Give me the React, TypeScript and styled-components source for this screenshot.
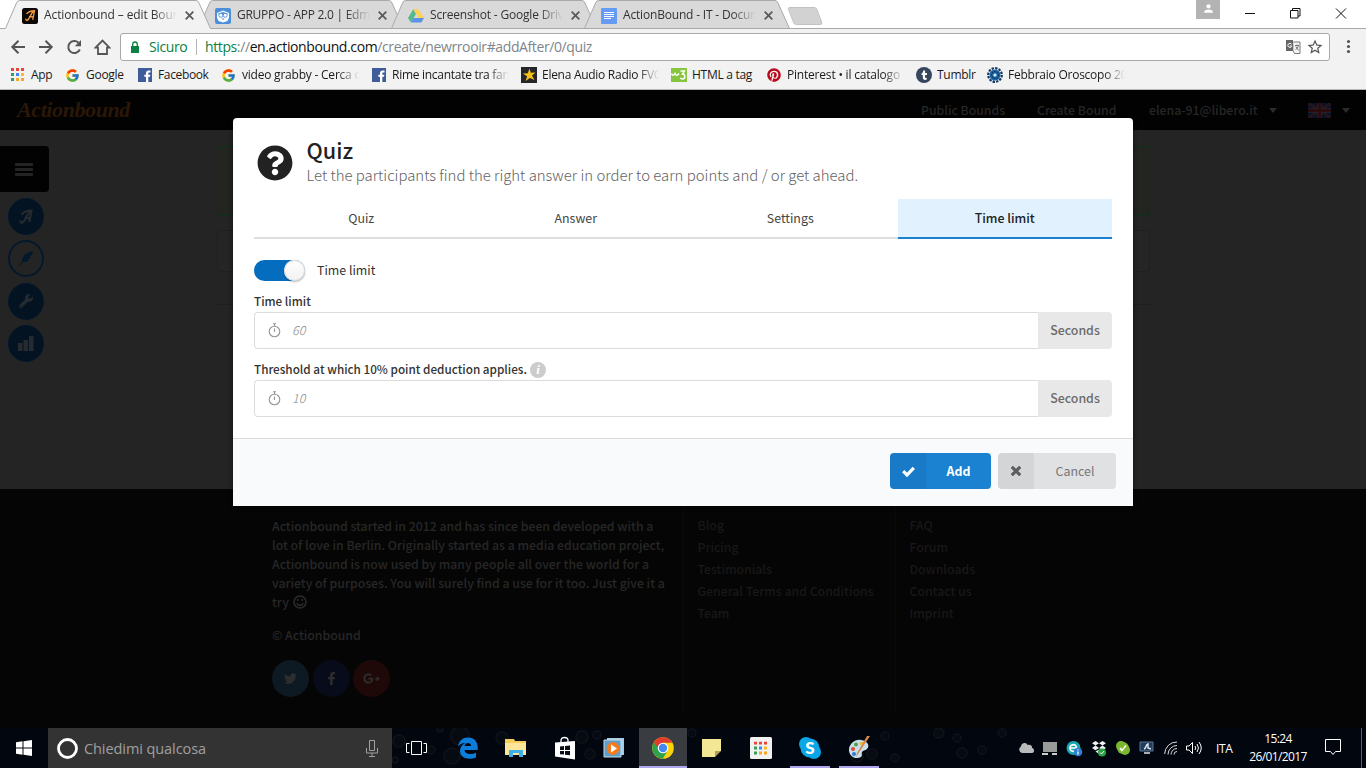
import React from "react";
import styled, { createGlobalStyle } from "styled-components";
import {
  FaTwitter,
  FaFacebookF,
  FaWrench,
  FaGooglePlusG,
  FaQuestionCircle,
  FaPinterest,
} from "react-icons/fa";
import { FcGoogle } from "react-icons/fc";
import { MdStarBorder, MdPerson } from "react-icons/md";

const uiFont = `"Open Sans", "Noto Sans", sans-serif`;
const siteFont = `"Noto Sans CJK SC", "Open Sans", sans-serif`;

const GlobalStyle = createGlobalStyle`
  * { box-sizing: border-box; }
  html, body { margin: 0; padding: 0; }
  body { width: 1366px; height: 768px; overflow: hidden; background: #fff; }
  svg { display: block; flex: none; }
`;

const Screen = styled.div`
  width: 1366px;
  height: 768px;
  display: flex;
  flex-direction: column;
  overflow: hidden;
`;

/* ---------- Browser chrome ---------- */

const TabStrip = styled.div`
  height: 29px;
  flex: none;
  display: flex;
  padding-left: 5px;
  background: linear-gradient(#fff 28px, #a9a9a9 28px);
`;

const TabBox = styled.div<{ $active?: boolean }>`
  display: grid;
  width: 206px;
  height: 29px;
  margin-right: -13px;
  position: relative;
  z-index: ${(p) => (p.$active ? 2 : 1)};
  > * { grid-area: 1 / 1; }
`;

const TabContent = styled.div`
  display: flex;
  align-items: center;
  padding: 2px 0 0 17px;
`;

const FadeText = styled.span<{ $w: number; $ls?: number; $fade?: boolean }>`
  width: ${(p) => p.$w}px;
  overflow: hidden;
  white-space: nowrap;
  letter-spacing: ${(p) => p.$ls ?? -0.28}px;
  ${(p) => p.$fade && "mask-image: linear-gradient(90deg, #000 82%, transparent);"}
`;

const TabTitle = styled(FadeText)`
  margin: 0 7.5px 1px 6px;
  font: 12px/18px ${uiFont};
  color: #333;
`;

const NewTab = styled.svg`
  margin: 7px 0 0 10px;
`;

const WindowControls = styled.div`
  margin-left: auto;
  display: flex;
  align-items: flex-start;
`;

const UserBadge = styled.div`
  width: 24px;
  height: 19px;
  margin-right: 25px;
  background: #b3b3b3;
  display: flex;
  justify-content: center;
  padding-top: 2px;
`;

const Toolbar = styled.div`
  height: 32px;
  flex: none;
  display: flex;
  align-items: center;
  background: #f2f2f2;
  padding: 4px 0 0 10px;
`;

const NavIcons = styled.div`
  width: 110px;
  display: flex;
  gap: 11px;
`;

const AddressBar = styled.div`
  width: 1210px;
  height: 28px;
  display: flex;
  align-items: center;
  padding: 0 5px 0 9px;
  background: #fff;
  border: 1px solid #a9a9a9;
  border-radius: 3px;
  font: 14px/20px ${uiFont};
  color: #80868b;
  letter-spacing: -0.39px;
`;

const Secure = styled.span`
  margin-left: 9px;
  width: 47px;
  color: #0b8043;
`;

const Url = styled.span`
  flex: 1;
  b { font-weight: 400; color: #111; }
  i { font-style: normal; color: #0b8043; }
`;

const AddressSeparator = styled.span`
  width: 1px;
  height: 16px;
  background: #b5b5b5;
  margin-right: 8px;
`;

const Bookmarks = styled.div`
  height: 29px;
  flex: none;
  display: flex;
  align-items: center;
  padding-left: 10px;
  background: #f2f2f2;
  border-bottom: 1px solid #b6b9b6;
`;

const Bookmark = styled.div<{ $w: number }>`
  width: ${(p) => p.$w}px;
  display: flex;
  align-items: center;
  gap: 5px;
  font: 12px/18px ${uiFont};
  color: #1a1a1a;
`;

/* ---------- Site behind the dialog ---------- */

const Page = styled.main`
  height: 638px;
  flex: none;
  display: flex;
  flex-direction: column;
  background: #242424;
  position: relative;
  font-family: ${siteFont};
`;

const SiteHeader = styled.header`
  height: 40px;
  flex: none;
  display: flex;
  align-items: center;
  padding: 0 16px 0 17px;
  background: #020202;
  color: #262626;
  font-size: 12.25px;
  font-weight: 500;
`;

const Logo = styled.div`
  font: italic bold 22px/30px "Liberation Serif", serif;
  letter-spacing: -0.4px;
  color: #2b1707;
  margin-right: auto;
`;

const HeaderLink = styled.span<{ $w: number }>`
  width: ${(p) => p.$w}px;
  white-space: nowrap;
`;

const Caret = styled.span`
  border: 4px solid transparent;
  border-top: 5px solid #2b2b2b;
  border-bottom: 0;
`;

const SiteBody = styled.div`
  height: 359px;
  flex: none;
  display: flex;
  padding-top: 16px;
`;

const SideBar = styled.nav`
  width: 217px;
  display: flex;
  flex-direction: column;
`;

const MenuButton = styled.div`
  width: 49px;
  height: 46px;
  margin-bottom: 6px;
  padding: 17px 0 0 15px;
  display: flex;
  flex-direction: column;
  gap: 2px;
  background: #020202;
  border-radius: 0 4px 4px 0;
`;

const MenuLine = styled.span`
  width: 18px;
  height: 3px;
  border-radius: 1px;
  background: #242424;
`;

const RoundButton = styled.div<{ $outline?: boolean }>`
  width: 36px;
  height: 37px;
  margin: 0 0 5.4px 8px;
  display: flex;
  align-items: center;
  justify-content: center;
  border-radius: 50%;
  border: ${(p) => (p.$outline ? 2 : 1)}px solid #04182b;
  background: ${(p) => (p.$outline ? "transparent" : "#031322")};
  color: ${(p) => (p.$outline ? "#04182b" : "#262b30")};
`;

const Content = styled.div`
  width: 933px;
`;

const Notice = styled.div`
  height: 70px;
  border: 1px solid #0b2f18;
  border-radius: 4px;
  background: #222520;
`;

const Panel = styled.div`
  height: 42px;
  margin: 14px 0 32px;
  border: 1px solid #202020;
  border-radius: 4px;
  background: #252525;
`;

const Rule = styled.div`
  height: 1px;
  background: #1e1e1e;
`;

const SiteFooter = styled.footer`
  flex: 1;
  display: flex;
  padding: 28px 0 14px 272px;
  background: #050505;
`;

const About = styled.div`
  width: 411px;
  font-size: 12.27px;
  font-weight: 500;
  line-height: 19.1px;
  color: #272727;
  white-space: nowrap;
`;

const Paragraph = styled.p`
  margin: 0 0 14px;
`;

const TryLine = styled.span`
  display: flex;
  align-items: center;
  gap: 4px;
`;

const Socials = styled.div`
  display: flex;
  gap: 3.5px;
`;

const Social = styled.div<{ $bg: string }>`
  width: 37px;
  height: 37px;
  border-radius: 50%;
  background: ${(p) => p.$bg};
  color: #2d2d2d;
  display: flex;
  align-items: center;
  justify-content: center;
`;

const FooterColumn = styled.ul`
  width: 212px;
  height: 225px;
  margin: -28px 0 0;
  padding: 25px 0 0 13.5px;
  list-style: none;
  border-left: 1px solid #0a0a0a;
  font-size: 12.27px;
  font-weight: 500;
  line-height: 22px;
  color: #181818;
`;

/* ---------- Dialog ---------- */

const Dialog = styled.section`
  position: absolute;
  left: 233px;
  top: 28px;
  width: 900px;
  height: 388px;
  display: flex;
  flex-direction: column;
  background: #fff;
  border-radius: 4px 4px 0 0;
  box-shadow: 0 1px 4px rgba(0, 0, 0, 0.6);
  font-size: 12.4px;
  color: #333;
`;

const DialogHeader = styled.div`
  display: flex;
  height: 81px;
  padding: 15px 0 0 24px;
  gap: 13.5px;
  svg { margin-top: 12px; }
`;

const DialogTitle = styled.h1`
  margin: 0;
  font-size: 21.6px;
  line-height: 34px;
  font-weight: 500;
  color: #222;
`;

const DialogSubtitle = styled.p`
  margin: 0;
  font-size: 14.91px;
  line-height: 16px;
  font-weight: 300;
  color: #626262;
`;

const DialogTabs = styled.div`
  display: flex;
  margin: 0 21px 21px;
`;

const DialogTab = styled.div<{ $active?: boolean }>`
  flex: 1;
  height: 40px;
  line-height: 38px;
  text-align: center;
  border-bottom: 2px solid ${(p) => (p.$active ? "#1b82d2" : "#dedede")};
  background: ${(p) => (p.$active ? "#e1f1fe" : "transparent")};
  font-weight: ${(p) => (p.$active ? 500 : 400)};
  color: ${(p) => (p.$active ? "#222" : "#444")};
`;

const SwitchRow = styled.div`
  display: flex;
  align-items: flex-start;
  gap: 12px;
  height: 21px;
  line-height: 20.5px;
  margin: 0 21px 10px;
`;

const Switch = styled.div`
  width: 51px;
  height: 21px;
  display: flex;
  justify-content: flex-end;
  border-radius: 11px;
  background: #056dbd;
`;

const Knob = styled.div`
  width: 21px;
  height: 21px;
  border-radius: 50%;
  background: linear-gradient(#fff, #f1f1f1);
  box-shadow: 0 1px 2px rgba(0, 0, 0, 0.3), inset 0 0 0 1px #dcdcdc;
`;

const Field = styled.div`
  margin: 0 21px 10px;
`;

const FieldLabel = styled.div`
  display: flex;
  gap: 3px;
  height: 21px;
  font-size: 11.72px;
  line-height: 19px;
  font-weight: 500;
  color: #333;
`;

const InfoBadge = styled.span`
  width: 16px;
  height: 16px;
  margin-top: 3px;
  border-radius: 50%;
  background: #ccc;
  color: #fff;
  font: italic bold 13px/15px "Liberation Serif", serif;
  text-align: center;
`;

const InputGroup = styled.div`
  display: flex;
  height: 37px;
`;

const Input = styled.div`
  width: 784px;
  display: flex;
  align-items: center;
  gap: 11.5px;
  padding: 0 0 2px 12.5px;
  border: 1px solid #dcdcdc;
  border-right: 0;
  border-radius: 4px 0 0 4px;
  color: #888;
  font-weight: 300;
  font-style: italic;
`;

const Addon = styled.div`
  flex: 1;
  line-height: 36px;
  text-align: center;
  background: #e8e8e8;
  border-radius: 0 4px 4px 0;
  font-weight: 500;
  color: #6c6c6c;
`;

const DialogFooter = styled.div`
  margin-top: auto;
  height: 68px;
  display: flex;
  justify-content: flex-end;
  gap: 7px;
  padding: 14px 17px 0 0;
  background: #f9fafc;
  border-top: 1px solid #d9dadb;
`;

const Button = styled.div<{ $primary?: boolean }>`
  width: ${(p) => (p.$primary ? 101 : 118)}px;
  height: 36px;
  display: flex;
  overflow: hidden;
  border-radius: 4px;
  background: ${(p) => (p.$primary ? "#1b82d2" : "#e0e1e2")};
  color: ${(p) => (p.$primary ? "#fff" : "#767778")};
  font-weight: ${(p) => (p.$primary ? 700 : 400)};
  line-height: 37px;
`;

const ButtonIcon = styled.span`
  width: 36px;
  display: flex;
  align-items: center;
  justify-content: center;
  background: rgba(0, 0, 0, 0.05);
`;

const ButtonLabel = styled.span`
  flex: 1;
  text-align: center;
`;

/* ---------- Taskbar ---------- */

const Taskbar = styled.div`
  height: 40px;
  flex: none;
  display: flex;
  align-items: center;
  background: #02060f;
  position: relative;
  color: #fff;
  font-family: ${uiFont};
`;

const Bubbles = styled.svg`
  position: absolute;
  left: 392px;
  top: 0;
`;

const StartButton = styled.div`
  width: 48px;
  display: flex;
  justify-content: center;
`;

const SearchBox = styled.div`
  width: 344px;
  height: 40px;
  display: flex;
  align-items: center;
  padding: 0 14px 0 8px;
  background: #333;
  color: #a0a0a0;
  font-size: 14.5px;
  letter-spacing: -0.08px;
  span { flex: 1; padding-left: 5px; }
`;

const AppSlot = styled.div<{ $state?: "active" | "open" }>`
  position: relative;
  width: 49px;
  height: 40px;
  display: flex;
  align-items: center;
  justify-content: center;
  background: ${(p) => (p.$state === "active" ? "#393d42" : "transparent")};
  background-clip: padding-box;
  border-right: 1px solid transparent;
  &:first-of-type { margin-right: 2px; }
  &::after {
    content: "";
    display: ${(p) => (p.$state ? "block" : "none")};
    position: absolute;
    bottom: 0;
    left: ${(p) => (p.$state === "active" ? 0 : 4)}px;
    right: ${(p) => (p.$state === "active" ? 0 : 4)}px;
    height: 2px;
    background: #aea5ee;
  }
`;

const AppRow = styled.div`
  display: flex;
`;

const Tray = styled.div`
  position: relative;
  margin-left: auto;
  display: flex;
  align-items: center;
  height: 40px;
`;

const TrayIcon = styled.div`
  width: 24.1px;
  display: flex;
  justify-content: center;
`;

const Language = styled.span`
  width: 32px;
  padding-left: 9px;
  font-size: 12px;
  letter-spacing: -0.4px;
`;

const Clock = styled.div`
  width: 78px;
  text-align: center;
  font-size: 12px;
  line-height: 18px;
  letter-spacing: -0.6px;
`;

const ShowDesktop = styled.span`
  width: 5px;
  height: 40px;
  margin-left: 16px;
  border-left: 1px solid #5b5e64;
`;

/* ---------- Drawn icons ---------- */

const Cross = ({ size = 9, color = "#5a5a5a", w = 1.8 }) => (
  <svg width={size} height={size} viewBox="0 0 9 9">
    <path d="M.7.7 8.3 8.3M8.3.7.7 8.3" stroke={color} strokeWidth={w} />
  </svg>
);

const ScriptA = ({ color = "#262b30", w = 1.8 }) => (
  <svg width="14" height="16" viewBox="0 0 14 16">
    <path d="M2.5 5.5C5 2.5 8.5 1.5 12.500 1.5L10.300 13M11.800 1.800C8 4 6.500 12 3.500 13.500 2 14 1 12.500 2.200 11.500M5.500 9h5" fill="none" stroke={color} strokeWidth={w} />
  </svg>
);

const ActionboundIcon = () => (
  <svg width="16" height="16">
    <rect width="16" height="16" rx="2.5" fill="#0a0705" />
    <g transform="translate(2.500 1.500) scale(.8)"><ScriptA color="#f0963c" w={1.7} /></g>
  </svg>
);

const Quill = () => (
  <svg width="14" height="15" viewBox="0 0 14 15" fill="currentColor">
    <path d="M13.800.3C9 .6 5 3.500 3.500 7.300c-.5 1.300-.7 2-.6 3L.3 14.500l1 .2L3.800 11c2.700.2 4.700-.5 6-2L7.500 8.800l3.300-1 1.200-2.200-2.700.2 3.500-1.600z" />
  </svg>
);

const EdmodoIcon = () => (
  <svg width="16" height="16">
    <rect width="16" height="16" rx="2" fill="#4b8fdb" />
    <path d="M2 5 8 2.500 14 5v4.500L12.500 13 8 14.500 3.500 13 2 9.500z" fill="#fff" />
    <path d="M3 5.500 8 4l5 1.500-1.500 1.800h-7z" fill="#4b8fdb" />
    <circle cx="5.800" cy="7.300" r="2" fill="#fff" stroke="#4b8fdb" strokeWidth=".9" />
    <circle cx="10.200" cy="7.300" r="2" fill="#fff" stroke="#4b8fdb" strokeWidth=".9" />
    <path d="M6.500 10.500h3L8 12z" fill="#4b8fdb" />
  </svg>
);

const DriveIcon = () => (
  <svg width="16" height="16">
    <path d="M5.300 1.300 8 6 2.900 14.600 0 10z" fill="#55b98b" />
    <path d="M5.300 1.300h5.200L16 10h-5.500z" fill="#fbd157" />
    <path d="M5.500 10H16l-2.700 4.600H2.900z" fill="#5b92ec" />
  </svg>
);

const DocsIcon = () => (
  <svg width="16" height="16">
    <rect width="16" height="16" rx="1" fill="#659bf4" />
    <path d="M3 4.500h10M3 6.500h10M3 8.500h10M3 10.500h7" stroke="#fff" />
  </svg>
);

const AppsIcon = () => {
  const colors = ["#eb4335", "#eb4335", "#eb4335", "#34a056", "#4285f4", "#fbb928", "#34a056", "#f6a623", "#f6a623"];
  return (
    <svg width="16" height="14" viewBox="0 0 16 14">
      {colors.map((c, i) => (
        <rect key={i} x={1 + (i % 3) * 5} y={Math.floor(i / 3) * 5} width="3" height="3" fill={c} />
      ))}
    </svg>
  );
};

const FacebookIcon = () => (
  <svg width="16" height="16">
    <rect x="1" y="1" width="14" height="14" fill="#3f5c9a" />
    <path d="M11.300 15V9.800H13l.3-2.100h-2V6.400c0-.7.300-1 1-1h1.200V3.500h-1.700c-1.800 0-2.800 1-2.800 2.700v1.500H7.300v2.100H9V15z" fill="#fff" />
  </svg>
);

const StarIcon = () => (
  <svg width="16" height="16">
    <rect width="16" height="16" fill="#26262a" />
    <path d="m8.500 1.500 1.300 4.300 4.700-.3-3.500 3.100 2.500 4.400-4.600-2-4.300 3 1.500-4.800-4.300-2.600 5-.4z" fill="#f5c119" />
  </svg>
);

const W3Icon = () => (
  <svg width="16" height="14">
    <rect width="16" height="14" fill="#87c540" />
    <path d="M.5 5.500Q2 9 4 5.500 5.500 9 8 5.500M9.500 3h4l-2 3c3 0 3 5 0 5-1.200 0-2-.5-2.200-1.200" fill="none" stroke="#fff" strokeWidth="1.500" />
  </svg>
);

const TumblrIcon = () => (
  <svg width="16" height="16">
    <circle cx="8" cy="8" r="8" fill="#36465d" />
    <path d="M7.200 3.500h1.900v2.600H11v1.800H9.100v2.400c0 .9.900 1 1.700.5v1.800c-2.300.9-4 0-4-2V7.900H5.500V6.500c1-.3 1.600-1.200 1.700-3z" fill="#fff" />
  </svg>
);

const HoroscopeIcon = () => (
  <svg width="16" height="16">
    <circle cx="8" cy="8" r="6.800" fill="none" stroke="#14365f" strokeWidth="2.200" strokeDasharray="2.400 1.150" />
    <circle cx="8" cy="8" r="5.500" fill="#1b68a6" />
    <circle cx="8" cy="8" r="3.500" fill="none" stroke="#0f3765" strokeWidth="1.300" strokeDasharray="1.500 1" />
    <circle cx="8" cy="8" r="1.600" fill="#d5edf8" />
  </svg>
);

const Stopwatch = () => (
  <svg width="13" height="16" fill="none" stroke="#969696" strokeWidth="1.100">
    <circle cx="6.500" cy="9.500" r="5.300" />
    <path d="M6.500 6.500v3.500M6.500 2v2M5 1.800h3" />
  </svg>
);

const Flag = () => (
  <svg width="23" height="15">
    <rect width="23" height="15" fill="#0b1024" />
    <path d="m0 0 23 15M23 0 0 15" stroke="#26262a" strokeWidth="2.500" />
    <path d="m0 0 23 15M23 0 0 15" stroke="#2b0b10" strokeWidth="1.200" />
    <path d="M11.500 0v15M0 7.500h23" stroke="#26262a" strokeWidth="4.500" />
    <path d="M11.500 0v15M0 7.500h23" stroke="#2b0b10" strokeWidth="3" />
  </svg>
);

const ChromeIcon = () => (
  <svg width="22" height="22" viewBox="0 0 22 22">
    <circle cx="11" cy="11" r="10.800" fill="#fcd20b" />
    <path d="M1.650 5.600A10.800 10.800 0 0 1 20.400 5.700H11L6.300 13.700z" fill="#e33b2e" />
    <path d="M1.650 5.600A10.800 10.800 0 0 0 10.800 21.800l4.800-8.100L11 16z L6.300 13.700z" fill="#2fa24d" />
    <circle cx="11" cy="11" r="5.300" fill="#fff" />
    <circle cx="11" cy="11" r="4.200" fill="#4587f3" />
  </svg>
);

const bubbles = [[7, 13, 6], [68, 8, 9], [60, 28, 8], [110, 10, 6], [3, 32, 3], [39, 22, 4], [48, 1, 3], [190, 9, 6], [198, 26, 5], [205, 7, 4], [300, 5, 4], [465, 28, 6], [480, 26, 5], [503, 30, 4], [493, 8, 4], [547, 5, 5], [570, 25, 5], [565, 10, 4], [610, 5, 4], [590, 22, 4]];

const tabs = [
  { title: "Actionbound – edit Boun", icon: <ActionboundIcon />, active: true, ls: -0.1 },
  { title: "GRUPPO - APP 2.0 | Edmodo", icon: <EdmodoIcon />, ls: -0.26 },
  { title: "Screenshot - Google Drive", icon: <DriveIcon />, ls: -0.18 },
  { title: "ActionBound - IT - Documenti", icon: <DocsIcon />, ls: -0.18 },
];

const bookmarks = [
  { w: 55, t: "App", icon: <AppsIcon /> },
  { w: 72, t: "Google", icon: <FcGoogle size={15} style={{ marginRight: 1 }} /> },
  { w: 84, t: "Facebook", ls: -0.36, icon: <FacebookIcon /> },
  { w: 150, t: "video grabby - Cerca con", fade: true, ls: -0.22, icon: <FcGoogle size={15} style={{ marginRight: 1 }} /> },
  { w: 150, t: "Rime incantate tra fanta", fade: true, icon: <FacebookIcon /> },
  { w: 150, t: "Elena Audio Radio FVG", fade: true, icon: <StarIcon /> },
  { w: 95, t: "HTML a tag", icon: <W3Icon /> },
  { w: 150, t: "Pinterest • il catalogo", fade: true, ls: -0.2, icon: <FaPinterest size={14} color="#bd081c" style={{ margin: "0 1px" }} /> },
  { w: 71, t: "Tumblr", icon: <TumblrIcon /> },
  { w: 150, t: "Febbraio Oroscopo 2017", fade: true, ls: -0.24, icon: <HoroscopeIcon /> },
];

export default function App() {
  return (
    <Screen>
      <GlobalStyle />
      <TabStrip>
        {tabs.map((t) => (
          <TabBox key={t.title} $active={t.active}>
            <svg width="206" height="29">
              <path d="M0 29 .5 28 11.500 3Q12.500.5 14.500.5H191Q193 .5 194 3L205.500 28.500V29z" fill={t.active ? "#f2f2f2" : "#d9d9d9"} />
              <path d="M.5 28.500 11.500 3Q12.500.5 14.500.5H191Q193 .5 194 3L205.500 28.500" fill="none" stroke="#a9a9a9" />
              {!t.active && <path d="M0 28.500h206" stroke="#a9a9a9" />}
            </svg>
            <TabContent>
              {t.icon}
              <TabTitle $w={133} $ls={t.ls} $fade>{t.title}</TabTitle>
              <Cross />
            </TabContent>
          </TabBox>
        ))}
        <NewTab width="36" height="19">
          <path d="M3 .5h24q2 0 2.700 1.500l5 13q.8 2.500-1.700 2.500H9.500q-2 0-2.700-1.500L1.500 2.500Q.8.500 3 .5z" fill="#d2d2d2" stroke="#c2c2c2" />
        </NewTab>
        <WindowControls>
          <UserBadge><MdPerson size={13} color="#fff" /></UserBadge>
          <svg width="121" height="28" fill="none" stroke="#111">
            <path d="M0 13.500h10M45.500 10.500h7.500v7.500h-7.500zM47.500 10V8.500h7.500V16H53M91 8.500l10 10M101 8.500l-10 10" />
          </svg>
        </WindowControls>
      </TabStrip>

      <Toolbar>
        <NavIcons>
          <svg width="17" height="16" fill="none" stroke="#555" strokeWidth="2"><path d="M15 8H2.500M8.500 1.800 2.300 8 8.500 14.200" /></svg>
          <svg width="17" height="16" fill="none" stroke="#555" strokeWidth="2"><path d="M1 8h12.500M7.500 1.800 13.700 8 7.500 14.200" /></svg>
          <svg width="17" height="16" fill="none" stroke="#555" strokeWidth="2"><path d="M13.800 10.500A6 6 0 1 1 12.500 3.800" /><path d="M15 1v6.200H8.800z" fill="#555" stroke="none" /></svg>
          <svg width="17" height="16" fill="none" stroke="#555" strokeWidth="1.800"><path d="M1.500 8.700 8.500 1.500l7 7.200H13V15H4V8.700z" /></svg>
        </NavIcons>
        <AddressBar>
          <svg width="10" height="13"><path d="M1 5h8v7H1z" fill="#0b8043" /><path d="M2.700 6V3.300a2.300 2.300 0 0 1 4.600 0V6" fill="none" stroke="#0b8043" strokeWidth="1.300" /></svg>
          <Secure>Sicuro</Secure>
          <AddressSeparator />
          <Url><i>https</i>://<b>en.actionbound.com</b>/create/newrrooir#addAfter/0/quiz</Url>
          <svg width="15" height="15">
            <path d="M0 0h7l1.500 11H0z" fill="#666" /><path d="M7.500 2H14v11.500H8.500L7.300 11" fill="#f4f4f4" stroke="#777" />
            <path d="M5.500 4.200A2 2 0 1 0 5.800 6H4" fill="none" stroke="#fff" /><path d="M9 5.500h4M11 4.500v1M12.500 5.500c-.5 2-1.500 3.500-3 4M9.800 6.500l2.700 4" stroke="#777" fill="none" />
          </svg>
          <MdStarBorder size={18} color="#555" style={{ marginLeft: 5 }} />
        </AddressBar>
        <svg width="36" height="16" fill="#555"><circle cx="18.500" cy="2.500" r="1.600" /><circle cx="18.500" cy="7.500" r="1.600" /><circle cx="18.500" cy="12.500" r="1.600" /></svg>
      </Toolbar>
      <Bookmarks>
        {bookmarks.map((b) => (
          <Bookmark key={b.t} $w={b.w}>
            {b.icon}
            <FadeText $w={b.fade ? 117 : b.w - 21} $ls={b.ls} $fade={b.fade}>{b.t}</FadeText>
          </Bookmark>
        ))}
      </Bookmarks>

      <Page>
        <SiteHeader>
          <Logo>Actionbound</Logo>
          <HeaderLink $w={116}>Public Bounds</HeaderLink>
          <HeaderLink $w={112}>Create Bound</HeaderLink>
          <HeaderLink $w={120}>elena-91@libero.it</HeaderLink>
          <Caret />
          <HeaderLink $w={31} />
          <Flag />
          <HeaderLink $w={11} />
          <Caret />
        </SiteHeader>
        <SiteBody>
          <SideBar>
            <MenuButton><MenuLine /><MenuLine /><MenuLine /></MenuButton>
            <RoundButton><ScriptA w={2.1} /></RoundButton>
            <RoundButton $outline><Quill /></RoundButton>
            <RoundButton><FaWrench size={14} /></RoundButton>
            <RoundButton>
              <svg width="16" height="15" fill="#262b30"><path d="M0 7h4.500v8H0zM5.500 4H10v11H5.500zM11 0h4.500v15H11z" /></svg>
            </RoundButton>
          </SideBar>
          <Content>
            <Notice />
            <Panel />
            <Rule />
          </Content>
        </SiteBody>
        <SiteFooter>
          <About>
            <Paragraph>
              Actionbound started in 2012 and has since been developed with a<br />
              lot of love in Berlin. Originally started as a media education project,<br />
              Actionbound is now used by many people all over the world for a<br />
              variety of purposes. You will surely find a use for it too. Just give it a<br />
              <TryLine>
                try
                <svg width="14" height="16" fill="none" stroke="#2b2b2b" strokeWidth="1.600">
                  <circle cx="7" cy="7" r="6" /><path d="M3.800 8.300c1 2.800 5.400 2.800 6.400 0M4.800 4v2M9.200 4v2" />
                </svg>
              </TryLine>
            </Paragraph>
            <Paragraph>© Actionbound</Paragraph>
            <Socials>
              <Social $bg="#0d1a24"><FaTwitter size={13} /></Social>
              <Social $bg="#080c1a"><FaFacebookF size={13} /></Social>
              <Social $bg="#1f0908"><FaGooglePlusG size={17} /></Social>
            </Socials>
          </About>
          <FooterColumn>
            <li>Blog</li><li>Pricing</li><li>Testimonials</li><li>General Terms and Conditions</li><li>Team</li>
          </FooterColumn>
          <FooterColumn>
            <li>FAQ</li><li>Forum</li><li>Downloads</li><li>Contact us</li><li>Imprint</li>
          </FooterColumn>
        </SiteFooter>

        <Dialog>
          <DialogHeader>
            <FaQuestionCircle size={36} color="#222" />
            <div>
              <DialogTitle>Quiz</DialogTitle>
              <DialogSubtitle>Let the participants find the right answer in order to earn points and / or get ahead.</DialogSubtitle>
            </div>
          </DialogHeader>
          <DialogTabs>
            <DialogTab>Quiz</DialogTab>
            <DialogTab>Answer</DialogTab>
            <DialogTab>Settings</DialogTab>
            <DialogTab $active>Time limit</DialogTab>
          </DialogTabs>
          <SwitchRow><Switch><Knob /></Switch>Time limit</SwitchRow>
          <Field>
            <FieldLabel>Time limit</FieldLabel>
            <InputGroup><Input><Stopwatch />60</Input><Addon>Seconds</Addon></InputGroup>
          </Field>
          <Field>
            <FieldLabel>Threshold at which 10% point deduction applies.<InfoBadge>i</InfoBadge></FieldLabel>
            <InputGroup><Input><Stopwatch />10</Input><Addon>Seconds</Addon></InputGroup>
          </Field>
          <DialogFooter>
            <Button $primary>
              <ButtonIcon>
                <svg width="13" height="11"><path d="M1.200 5.200 5 9 11.800 1.800" fill="none" stroke="#fff" strokeWidth="3.200" /></svg>
              </ButtonIcon>
              <ButtonLabel>Add</ButtonLabel>
            </Button>
            <Button>
              <ButtonIcon><Cross size={10} color="#5d5d5d" w={2.8} /></ButtonIcon>
              <ButtonLabel>Cancel</ButtonLabel>
            </Button>
          </DialogFooter>
        </Dialog>
      </Page>

      <Taskbar>
        <Bubbles width="974" height="40">
          {bubbles.map(([x, y, r], i) => (
            <circle key={i} cx={x} cy={y} r={r} fill="#060a11" stroke="#101319" strokeWidth="1.500" />
          ))}
        </Bubbles>
        <StartButton>
          <svg width="16" height="16" fill="#fff"><path d="M0 2.200 6.500 1.300V7.500H0zM7.500 1.200 16 0v7.500H7.500zM0 8.500h6.500v6.200L0 13.800zM7.500 8.500H16V16l-8.500-1.200z" /></svg>
        </StartButton>
        <SearchBox>
          <svg width="23" height="23"><circle cx="11.500" cy="11.500" r="9" fill="none" stroke="#fff" strokeWidth="2.800" /></svg>
          <span>Chiedimi qualcosa</span>
          <svg width="12" height="17" fill="none" stroke="#a0a0a0"><path d="M3.500.5h5v10h-5zM.5 8v5h11V8M6 13v3M3 16.500h6" /></svg>
        </SearchBox>
        <AppRow>
          <AppSlot>
            <svg width="21" height="14" fill="none" stroke="#fff"><path d="M5.500.5h10v13h-10zM3.500 2.500h-3v9h3M17.500 2.500h3v9h-3" /></svg>
          </AppSlot>
          <AppSlot>
            <svg width="21" height="22" viewBox="0 0 21 22"><path d="M1 9.500C2 3.500 6 .5 11 .5c6 0 9.700 4 9.700 10V13H7.500c.2 3.800 6.500 5.500 11.500 2.500v4.700C12.500 23.500 3 21.500 3 14c0-3.500 2-6.500 5.300-8C4.500 6 2 8 1 9.500zM7.500 9H14c.2-4-6-4-6.500 0z" fill="#0b7ddb" /></svg>
          </AppSlot>
          <AppSlot>
            <svg width="22" height="20"><path d="M0 1h9l1 2h11v14H0z" fill="#f5cd5a" /><path d="M0 5h21v12H0z" fill="#fde599" /><path d="M4 19v-7h14v7h-4v-4H8v4z" fill="#3eb1ec" /></svg>
          </AppSlot>
          <AppSlot>
            <svg width="22" height="24"><path d="M7 8V4.500q0-3 3.500-3T14 4.500V8" fill="none" stroke="#fff" strokeWidth="1.300" /><path d="M1 6.500 21 5v18.500L1 20.500z" fill="#fff" /><path d="M6 10.500l4-.4V14H6zM11 10l5-.5V14h-5zM6 15h4v3.600l-4-.4zM11 15h5v4.300l-5-.6z" fill="#0a0d14" /></svg>
          </AppSlot>
          <AppSlot>
            <svg width="22" height="20"><path d="M4 0h17v17H4z" fill="#a7cbe4" /><path d="M1 2h17v17H1z" fill="#5d9ecb" stroke="#c2dced" /><circle cx="10" cy="10.500" r="6.500" fill="#f37b21" /><path d="m8 6.500 6 4-6 4z" fill="#fff" /></svg>
          </AppSlot>
          <AppSlot $state="active"><ChromeIcon /></AppSlot>
          <AppSlot>
            <svg width="20" height="18"><path d="M0 0h19v12h-6v6H0z" fill="#f3e795" /><path d="M19 12h-6v6z" fill="#aea05a" /></svg>
          </AppSlot>
          <AppSlot>
            <svg width="22" height="22"><rect width="22" height="22" rx="1.500" fill="#f1f1f1" /><g transform="translate(3 4.500)"><AppsIcon /></g></svg>
          </AppSlot>
          <AppSlot $state="open">
            <svg width="24" height="24"><circle cx="8" cy="8" r="7" fill="#0aa6e6" /><circle cx="16" cy="16" r="7" fill="#0aa6e6" /><circle cx="12" cy="12" r="9.500" fill="#0aa6e6" /><text x="12" y="18" textAnchor="middle" fontFamily="Lato" fontWeight="900" fontSize="17" fill="#fff">S</text></svg>
          </AppSlot>
          <AppSlot $state="open">
            <svg width="26" height="24"><path d="M3 14C3 8 9 3 15 4c7 1 9 6 6 9-2 2-4 1-5 3s2 5-4 6c-5 .5-9-3-9-8z" fill="#c9dfec" /><circle cx="7" cy="13" r="2" fill="#e14b31" /><circle cx="10" cy="8.500" r="2" fill="#4aa546" /><circle cx="15.500" cy="7.500" r="1.800" fill="#f2b632" /><circle cx="8" cy="18" r="2" fill="#2b7dd0" /><path d="M24 0 12 18l-2 3 1-4L21 0z" fill="#d5884a" /></svg>
          </AppSlot>
        </AppRow>
        <Tray>
          <TrayIcon><svg width="17" height="12" fill="#b9babb"><path d="M4 11a3.500 3.500 0 0 1-1-6.500C3 1 8-.5 9.500 3c4-1 5 2 4.500 3 3 .5 2.500 5 0 5z" /></svg></TrayIcon>
          <TrayIcon><svg width="16" height="15"><path d="M1 1h14v10H1z" fill="#9a9a9a" /><path d="M0 13h6M10 13h5" stroke="#ccc" strokeWidth="2" /></svg></TrayIcon>
          <TrayIcon><svg width="17" height="17"><circle cx="7.500" cy="8" r="7" fill="#19a6ae" /><path d="M4 8h6.500c0-5-6.500-4-6.500 0s4.500 4 6 2" fill="none" stroke="#fff" strokeWidth="1.700" /><circle cx="12" cy="12" r="4.300" fill="#2f7fd3" /><path d="M12 9.500v1M12 11.500v3" stroke="#fff" strokeWidth="1.300" /></svg></TrayIcon>
          <TrayIcon><svg width="16" height="17"><path d="m4.500 1 3.500 2.300L11.500 1 15 3.300 11.500 5.600 15 8 11.500 10.300 8 8l-3.500 2.300L1 8l3.500-2.400L1 3.300zM8 3.300 4.500 5.600 8 8l3.500-2.400zM4.500 11.500 8 9.500l3.500 2L8 14z" fill="#f2f2f2" fillRule="evenodd" /><circle cx="11" cy="12.500" r="4" fill="#29a345" /><path d="m9 12.500 1.500 1.500 2.500-3" stroke="#fff" fill="none" /></svg></TrayIcon>
          <TrayIcon><svg width="16" height="16"><circle cx="6" cy="6" r="5" fill="#7cb82f" /><circle cx="10" cy="10" r="5" fill="#7cb82f" /><circle cx="8" cy="8" r="6" fill="#7cb82f" /><path d="m5 8 2 2.500 4-5" stroke="#fff" strokeWidth="1.500" fill="none" /></svg></TrayIcon>
          <TrayIcon><svg width="16" height="14"><path d="M1 1h13v9H1z" fill="#213c5c" stroke="#5d7893" /><path d="M5 8c3-1 1-4 4-5v4l3 1M5 12h6" stroke="#dbe8f2" fill="none" strokeWidth="1.400" /></svg></TrayIcon>
          <TrayIcon><svg width="14" height="14" fill="none" stroke="#ddd"><path d="M.7 13A12 12 0 0 1 13 1M4 13.500A9 9 0 0 1 13 4.500M7 13.500a6 6 0 0 1 6-6M10 13.500a3 3 0 0 1 3-3" /></svg></TrayIcon>
          <TrayIcon><svg width="17" height="14" fill="none" stroke="#fff"><path d="M.5 5v4h2.500l3.500 3.500v-11L3 5zM9 5q1.500 2 0 4M11 3q3 4 0 8M13 1q4.500 6 0 12" /></svg></TrayIcon>
          <Language>ITA</Language>
          <Clock>15:24<br />26/01/2017</Clock>
          <svg width="28" height="18" fill="none" stroke="#fff"><path d="M8.500.5h15v12h-5l-2.500 3-2.500-3h-5z" /></svg>
          <ShowDesktop />
        </Tray>
      </Taskbar>
    </Screen>
  );
}
